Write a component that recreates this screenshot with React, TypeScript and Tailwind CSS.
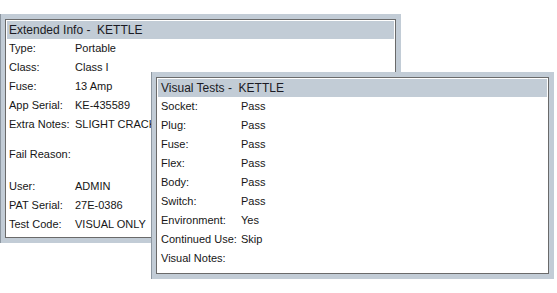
const extendedRows: { label: string; value: string; className?: string }[] = [
  { label: "Type:", value: "Portable" },
  { label: "Class:", value: "Class I" },
  { label: "Fuse:", value: "13 Amp" },
  { label: "App Serial:", value: "KE-435589" },
  { label: "Extra Notes:", value: "SLIGHT CRACK" },
  { label: "Fail Reason:", value: "", className: "mt-[11px]" },
  { label: "User:", value: "ADMIN", className: "mt-[13px]" },
  { label: "PAT Serial:", value: "27E-0386" },
  { label: "Test Code:", value: "VISUAL ONLY" },
];

const visualRows = [
  { label: "Socket:", value: "Pass" },
  { label: "Plug:", value: "Pass" },
  { label: "Fuse:", value: "Pass" },
  { label: "Flex:", value: "Pass" },
  { label: "Body:", value: "Pass" },
  { label: "Switch:", value: "Pass" },
  { label: "Environment:", value: "Yes" },
  { label: "Continued Use:", value: "Skip" },
  { label: "Visual Notes:", value: "" },
];

function InfoWindow({
  title,
  rows,
  labelW,
  indent,
  className,
}: {
  title: string;
  rows: { label: string; value: string; className?: string }[];
  labelW: string;
  indent: string;
  className: string;
}) {
  return (
    <div className={`absolute border-l border-[#8d97a1] bg-[#c2ccd6] pl-[4px] pr-[5px] py-[5px] ${className}`}>
      <div className="h-full border border-[#6a6a6a] bg-white p-px">
        <div className={`h-[18px] bg-[#c2ccd6] text-[12px] leading-[18px] whitespace-pre text-[#1b1b24] ${indent}`}>
          {title}
        </div>
        <div className="overflow-hidden">
          {rows.map((row) => (
            <div
              key={row.label}
              className={`flex h-[19px] text-[11px] leading-[19px] text-[#161616] whitespace-nowrap ${indent} ${row.className ?? ""}`}
            >
              <span className={`shrink-0 ${labelW}`}>{row.label}</span>
              <span>{row.value}</span>
            </div>
          ))}
        </div>
      </div>
    </div>
  );
}

export default function App() {
  return (
    <div
      className="relative h-[293px] w-[557px] overflow-hidden bg-white"
      style={{ fontFamily: '"Liberation Sans", Arial, sans-serif' }}
    >
      <InfoWindow
        title="Extended Info -  KETTLE"
        rows={extendedRows}
        labelW="w-[66px]"
        indent="pl-[2px]"
        className="left-0 top-[14px] h-[229px] w-[401px]"
      />
      <InfoWindow
        title="Visual Tests -  KETTLE"
        rows={visualRows}
        labelW="w-[80px]"
        indent="pl-[3px]"
        className="left-[151px] top-[72px] h-[207px] w-[403px]"
      />
    </div>
  );
}
